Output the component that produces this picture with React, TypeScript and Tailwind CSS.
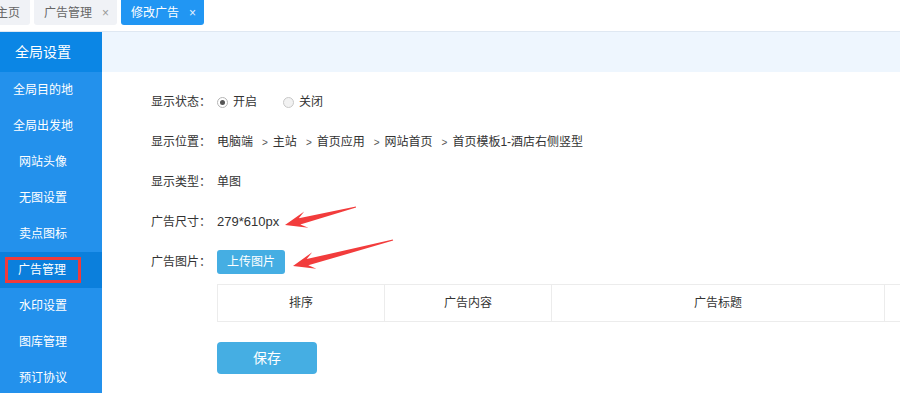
import React from "react";

const FONT = { fontFamily: '"Liberation Sans", "Noto Sans CJK SC", sans-serif' };

function arrowPoints(tx: number, ty: number, px: number, py: number) {
  const dx = px - tx;
  const dy = py - ty;
  const len = Math.sqrt(dx * dx + dy * dy);
  const ux = dx / len;
  const uy = dy / len;
  const nx = -uy;
  const ny = ux;
  const head = 22;
  const notch = 15;
  const bx = px - ux * notch;
  const by = py - uy * notch;
  const hx = px - ux * head;
  const hy = py - uy * head;
  const w0 = 0.6;
  const w1 = 3.2;
  const wb = 8.5;
  const pts = [
    [tx + nx * w0, ty + ny * w0],
    [bx + nx * w1, by + ny * w1],
    [hx + nx * wb, hy + ny * wb],
    [px, py],
    [hx - nx * wb, hy - ny * wb],
    [bx - nx * w1, by - ny * w1],
    [tx - nx * w0, ty - ny * w0],
  ];
  return pts.map((p) => `${p[0].toFixed(1)},${p[1].toFixed(1)}`).join(" ");
}

const sideItems = [
  "全局目的地",
  "全局出发地",
  "网站头像",
  "无图设置",
  "卖点图标",
  "广告管理",
  "水印设置",
  "图库管理",
  "预订协议",
];

function Row({ label, children }: { label: string; children: React.ReactNode }) {
  return (
    <div className="h-[40px] flex items-center text-[12px] text-[#333]">
      <div className="w-[66px] shrink-0">{label}</div>
      <div className="flex items-center">{children}</div>
    </div>
  );
}

function Sep() {
  return <span className="ml-[9px] mr-[5px] text-[10px] text-[#555]">&gt;</span>;
}

export default function App() {
  return (
    <div className="relative w-[900px] h-[393px] overflow-hidden bg-white" style={FONT}>
      {/* tab bar */}
      <div className="h-[32px] border-b border-[#dfe8f2] flex items-start gap-[4px] ml-[-14px]">
        <div className="h-[25px] px-[10px] bg-[#f0f2f6] rounded-b-[3px] flex items-center text-[12px] text-[#666]">
          主页
        </div>
        <div className="h-[25px] pl-[10px] pr-[8px] bg-[#f0f2f6] rounded-b-[3px] flex items-center text-[12px] text-[#666]">
          广告管理
          <span className="ml-[10px] text-[12px] text-[#999]">×</span>
        </div>
        <div className="h-[25px] pl-[10px] pr-[8px] bg-[#2196f3] rounded-b-[3px] flex items-center text-[12px] text-white">
          修改广告
          <span className="ml-[10px] text-[12px] text-[#e6f2ff]">×</span>
        </div>
      </div>

      <div className="flex h-[361px]">
        {/* sidebar */}
        <div className="w-[102px] shrink-0 bg-[#2391ec] flex flex-col overflow-hidden">
          <div className="h-[40px] shrink-0 bg-[#0b86e5] flex items-center justify-center pr-[16px] text-[14px] text-white">
            全局设置
          </div>
          {sideItems.map((t) => {
            const active = t === "广告管理";
            return active ? (
              <div key={t} className="h-[36px] shrink-0 flex items-center pl-[5px] bg-[#0b7fdc] text-[12px] text-white">
                <span className="border-[3px] border-[#f03a3a] h-[26px] w-[76px] flex items-center pl-[10px]">
                  {t}
                </span>
              </div>
            ) : (
              <div
                key={t}
                className="h-[36px] shrink-0 flex items-center justify-center pr-[16px] text-[12px] text-white"
              >
                {t}
              </div>
            );
          })}
        </div>

        {/* content */}
        <div className="flex-1 flex flex-col">
          <div className="h-[40px] shrink-0 bg-[#eef6fe]" />
          <div className="pl-[49px] pt-[10px]">
            <Row label="显示状态：">
              <span className="w-[11px] h-[11px] rounded-full border border-[#b5b5b5] bg-white flex items-center justify-center mr-[5px]">
                <span className="w-[5px] h-[5px] rounded-full bg-[#555]" />
              </span>
              <span>开启</span>
              <span className="w-[11px] h-[11px] rounded-full border border-[#c8c8c8] bg-[#f2f2f2] ml-[26px] mr-[5px]" />
              <span>关闭</span>
            </Row>
            <Row label="显示位置：">
              <span>电脑端</span>
              <Sep />
              <span>主站</span>
              <Sep />
              <span>首页应用</span>
              <Sep />
              <span>网站首页</span>
              <Sep />
              <span>首页模板1-酒店右侧竖型</span>
            </Row>
            <Row label="显示类型：">
              <span>单图</span>
            </Row>
            <Row label="广告尺寸：">
              <span className="text-[13px]">279*610px</span>
            </Row>
            <Row label="广告图片：">
              <button className="h-[24px] w-[68px] rounded-[3px] bg-[#45aee3] text-white text-[12px] flex items-center justify-center">
                上传图片
              </button>
            </Row>
            <div className="mt-[2px] ml-[66px] flex h-[38px] border border-[#ececec] text-[12px] text-[#333]">
              <div className="w-[167px] shrink-0 border-r border-[#ececec] flex items-center justify-center">排序</div>
              <div className="w-[167px] shrink-0 border-r border-[#ececec] flex items-center justify-center">广告内容</div>
              <div className="w-[333px] shrink-0 border-r border-[#ececec] flex items-center justify-center">广告标题</div>
              <div className="w-[100px] shrink-0" />
            </div>
            <button className="mt-[20px] ml-[66px] h-[32px] w-[100px] rounded-[4px] bg-[#45aee3] text-white text-[14px] flex items-center justify-center">
              保存
            </button>
          </div>
        </div>
      </div>

      {/* annotation arrows */}
      <svg className="absolute left-0 top-0 pointer-events-none" width="900" height="393">
        <polygon points={arrowPoints(356, 207, 285, 225)} fill="#f23c3c" />
        <polygon points={arrowPoints(393, 240, 293, 266)} fill="#f23c3c" />
      </svg>
    </div>
  );
}
